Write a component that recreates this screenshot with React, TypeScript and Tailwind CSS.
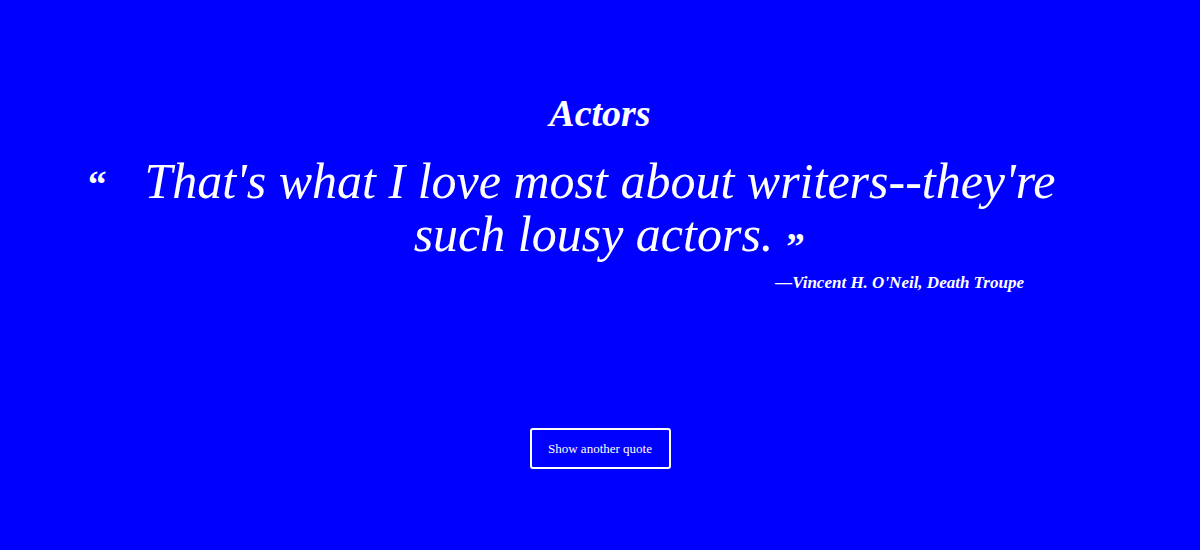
import React from "react";

const serif = { fontFamily: '"Liberation Serif", "DejaVu Serif", serif' };

function App() {
  return (
    <main
      className="flex min-h-screen w-full flex-col items-center bg-[#0000ff] text-white"
      style={serif}>
      <h1 className="mt-[91px] text-[38px] font-bold italic leading-[44px]">
        Actors
      </h1>
      <div className="relative mt-[20px] flex w-[848px] flex-col">
        <span className="absolute left-[-88px] top-[8px] text-[37px] font-bold leading-[44px]">
          &ldquo;
        </span>
        <p className="-mx-[80px] text-center text-[50px] italic leading-[53px]">
          That's what I love most about writers--they're
          <br />
          such lousy actors.
          <span className="relative top-[8px] inline-block w-0 overflow-visible whitespace-nowrap pl-[13px] text-[37px] font-bold not-italic">
            &rdquo;
          </span>
        </p>
        <p className="mt-[8px] text-right text-[17px] font-bold italic leading-[20px]">
          &mdash;Vincent H. O'Neil, Death Troupe
        </p>
      </div>
      <button className="mt-[135px] h-[41px] w-[141px] rounded-[3px] border-2 border-white text-[13px]">
        Show another quote
      </button>
    </main>
  );
}

export default App;
